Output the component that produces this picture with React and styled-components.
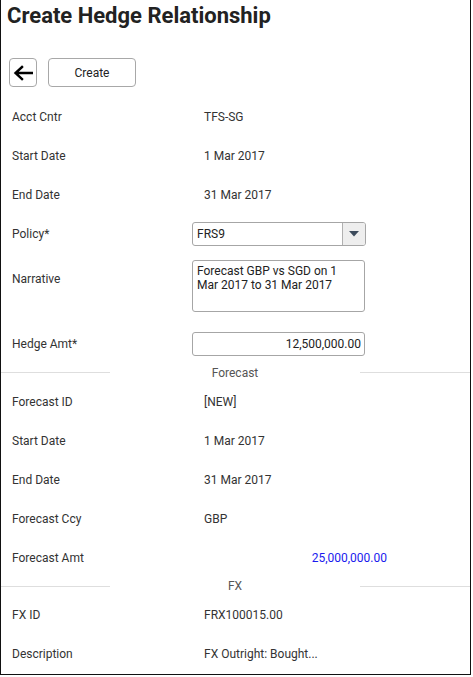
import styled, { createGlobalStyle } from 'styled-components'

const GlobalStyle = createGlobalStyle`
    html, body {
        margin: 0;
        padding: 0;
        background: #fff;
    }
    body {
        font-family: Roboto, "Liberation Sans", sans-serif;
        color: #333;
    }
`;

const Frame = styled.div`
    box-sizing: border-box;
    width: 471px;
    height: 675px;
    border: 1.5px solid #111;
    border-top: none;
    overflow: hidden;
`;

const Title = styled.h1`
    margin: 0;
    padding: 3px 0 0 6px;
    font-size: 22px;
    line-height: 26px;
    font-weight: 700;
    color: #222;
`;

const Toolbar = styled.div`
    display: flex;
    gap: 11px;
    padding: 29px 0 0 8px;
    margin-bottom: 10px;
    height: 29px;
`;

const Button = styled.button`
    box-sizing: border-box;
    height: 29px;
    width: ${p => p.$w}px;
    border: 1px solid #a8a8a8;
    border-radius: 4px;
    background: #fff;
    font-family: Roboto, "Liberation Sans", sans-serif;
    font-size: 12px;
    color: #222;
    display: flex;
    align-items: center;
    justify-content: center;
    padding: 0;
`;

const Row = styled.div`
    display: grid;
    grid-template-columns: 180px 1fr;
    align-items: ${p => (p.$top ? 'start' : 'center')};
    height: ${p => p.$h || 39}px;
    padding-left: 11px;
    font-size: 12px;
`;

const Label = styled.div`
    color: #333;
    margin-top: ${p => p.$mt || 0}px;
`;

const Value = styled.div`
    padding-left: 12px;
    color: #333;
`;

const Amount = styled.div`
    width: 183px;
    padding-left: 12px;
    text-align: right;
    color: #1a1aee;
`;

const SelectBox = styled.div`
    box-sizing: border-box;
    width: 174px;
    height: 24px;
    border: 1px solid #a6a6a6;
    border-radius: 3px;
    display: flex;
    overflow: hidden;
`;

const SelectText = styled.div`
    flex: 1;
    display: flex;
    align-items: center;
    padding-left: 4px;
    color: #222;
`;

const SelectArrow = styled.div`
    width: 22px;
    border-left: 1px solid #b0b0b0;
    background: #eeeeee;
    display: flex;
    align-items: center;
    justify-content: center;
`;

const TextArea = styled.div`
    box-sizing: border-box;
    width: 173px;
    height: 52px;
    margin-top: 7px;
    border: 1px solid #a6a6a6;
    border-radius: 3px;
    padding: 3px 4px;
    line-height: 14px;
    color: #222;
`;

const Input = styled.div`
    box-sizing: border-box;
    width: 173px;
    height: 24px;
    border: 1px solid #a6a6a6;
    border-radius: 3px;
    display: flex;
    align-items: center;
    justify-content: flex-end;
    padding-right: 3px;
    color: #222;
`;

const Section = styled.div`
    display: grid;
    grid-template-columns: 109px 1fr 110px;
    align-items: center;
    height: ${p => p.$h || 19}px;
    font-size: 12px;
    color: #555;
    &::before, &::after {
        content: '';
        height: 1px;
        background: #dedede;
    }
    span {
        text-align: center;
    }
`;

function Caret() {
    return (
        <svg width="10" height="6" viewBox="0 0 10 6">
            <path d="M0 0 L10 0 L5 5.5 Z" fill="#3c4b5c" />
        </svg>
    );
}

function BackArrow() {
    return (
        <svg width="20" height="16" viewBox="0 0 20 16">
            <path d="M19 8 H3 M9 2 L2.5 8 L9 14" stroke="#000" strokeWidth="2.4" fill="none" strokeLinecap="square" />
        </svg>
    );
}

function Field({ label, children }) {
    return (
        <Row>
            <Label>{label}</Label>
            <Value>{children}</Value>
        </Row>
    );
}

export default function App() {
    return (
        <Frame>
            <GlobalStyle />
            <Title>Create Hedge Relationship</Title>
            <Toolbar>
                <Button $w={28}><BackArrow /></Button>
                <Button $w={88}>Create</Button>
            </Toolbar>
            <Row><Label>Acct Cntr</Label><Value>TFS-SG</Value></Row>
            <Field label="Start Date">1 Mar 2017</Field>
            <Field label="End Date">31 Mar 2017</Field>
            <Row>
                <Label>Policy*</Label>
                <SelectBox>
                    <SelectText>FRS9</SelectText>
                    <SelectArrow><Caret /></SelectArrow>
                </SelectBox>
            </Row>
            <Row $top $h={71}>
                <Label $mt={19}>Narrative</Label>
                <TextArea>Forecast GBP vs SGD on 1 Mar 2017 to 31 Mar 2017</TextArea>
            </Row>
            <Row>
                <Label>Hedge Amt*</Label>
                <Input>12,500,000.00</Input>
            </Row>
            <Section><span>Forecast</span></Section>
            <Field label="Forecast ID">[NEW]</Field>
            <Field label="Start Date">1 Mar 2017</Field>
            <Field label="End Date">31 Mar 2017</Field>
            <Field label="Forecast Ccy">GBP</Field>
            <Row>
                <Label>Forecast Amt</Label>
                <Amount>25,000,000.00</Amount>
            </Row>
            <Section $h={18}><span>FX</span></Section>
            <Field label="FX ID">FRX100015.00</Field>
            <Field label="Description">FX Outright: Bought...</Field>
        </Frame>
    );
}
